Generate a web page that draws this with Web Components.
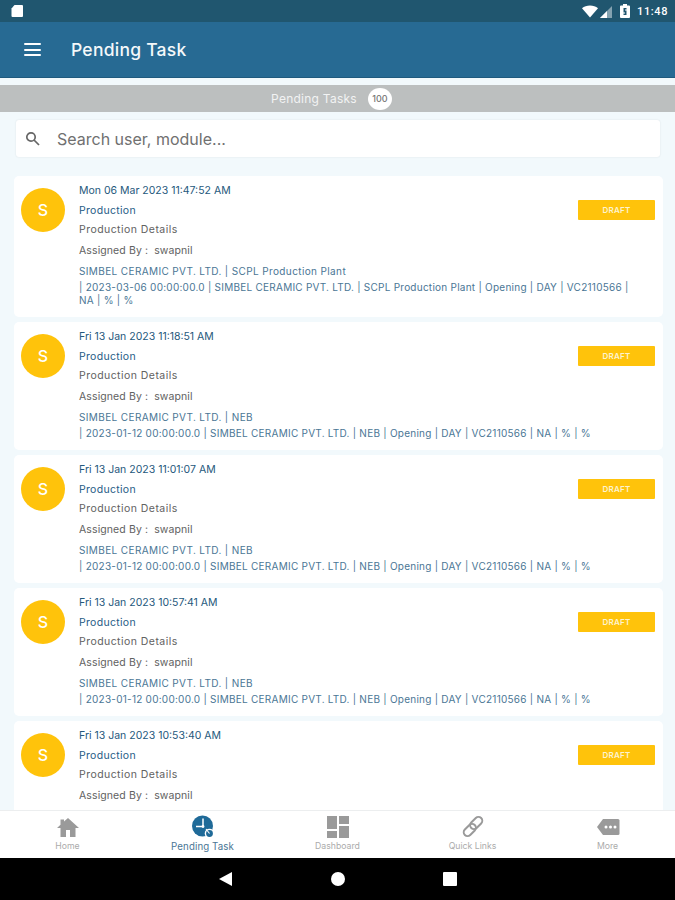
<!DOCTYPE html>
<html>
<head>
<meta charset="utf-8">
<title>Pending Task</title>
<style>
  html, body { margin: 0; padding: 0; }
  body {
    width: 675px;
    height: 900px;
    overflow: hidden;
    display: flex;
    flex-direction: column;
    background: #f2f9fc;
    font-family: Inter, "Open Sans", sans-serif;
  }
  task-list { flex: 1; min-height: 0; }
</style>
</head>
<body>
  <status-bar></status-bar>
  <app-bar>Pending Task</app-bar>
  <count-bar count="100">Pending Tasks</count-bar>
  <search-box placeholder="Search user, module..."></search-box>
  <task-list>
    <task-card date="Mon 06 Mar 2023 11:47:52 AM" company="SIMBEL CERAMIC PVT. LTD. | SCPL Production Plant">| 2023-03-06 00:00:00.0 | SIMBEL CERAMIC PVT. LTD. | SCPL Production Plant | Opening | DAY | VC2110566 | NA | % | %</task-card>
    <task-card date="Fri 13 Jan 2023 11:18:51 AM" company="SIMBEL CERAMIC PVT. LTD. | NEB">| 2023-01-12 00:00:00.0 | SIMBEL CERAMIC PVT. LTD. | NEB | Opening | DAY | VC2110566 | NA | % | %</task-card>
    <task-card date="Fri 13 Jan 2023 11:01:07 AM" company="SIMBEL CERAMIC PVT. LTD. | NEB">| 2023-01-12 00:00:00.0 | SIMBEL CERAMIC PVT. LTD. | NEB | Opening | DAY | VC2110566 | NA | % | %</task-card>
    <task-card date="Fri 13 Jan 2023 10:57:41 AM" company="SIMBEL CERAMIC PVT. LTD. | NEB">| 2023-01-12 00:00:00.0 | SIMBEL CERAMIC PVT. LTD. | NEB | Opening | DAY | VC2110566 | NA | % | %</task-card>
    <task-card date="Fri 13 Jan 2023 10:53:40 AM" company="SIMBEL CERAMIC PVT. LTD. | NEB">| 2023-01-12 00:00:00.0 | SIMBEL CERAMIC PVT. LTD. | NEB | Opening | DAY | VC2110566 | NA | % | %</task-card>
  </task-list>
  <bottom-nav>
    <nav-item label="Home">
      <svg viewBox="0 0 24 24" width="24" height="24"><path fill="#9a9a9a" d="M10 22v-7h4v7h5.500v-9H23L12 3 8 6.600V4.500H4.500v5.300L1 13h3.500v9z"/></svg>
    </nav-item>
    <nav-item label="Pending Task" active>
      <svg viewBox="0 0 24 24" width="24" height="24">
        <circle cx="11.500" cy="11" r="10.500" fill="#1f6a98"/>
        <path fill="none" stroke="#fff" stroke-width="1.500" d="M12 3.500v8H5"/>
        <circle cx="12" cy="11.500" r="1.400" fill="#fff"/>
        <circle cx="18.500" cy="18.500" r="4.800" fill="#fff"/>
        <circle cx="18.500" cy="18.500" r="3.400" fill="#1f6a98"/>
        <path fill="none" stroke="#fff" stroke-width="1.100" d="M15 14l3.500 4.500"/>
      </svg>
    </nav-item>
    <nav-item label="Dashboard">
      <svg viewBox="0 0 24 24" width="24" height="24" fill="#9a9a9a"><path d="M1 1h10v13H1zM13 1h10v8H13zM13 11h10v12H13zM1 16h10v7H1z"/></svg>
    </nav-item>
    <nav-item label="Quick Links">
      <svg viewBox="0 0 24 24" width="24" height="24" fill="none" stroke="#9a9a9a" stroke-width="2"><rect x="11.400" y="1" width="7.600" height="14" rx="3.800" transform="rotate(45 15.200 8)"/><rect x="5" y="8" width="7.600" height="14" rx="3.800" transform="rotate(45 8.800 15)"/></svg>
    </nav-item>
    <nav-item label="More">
      <svg viewBox="0 0 24 24" width="24" height="24"><path fill="#9a9a9a" d="M7 4h15a1.500 1.500 0 0 1 1.500 1.500v13A1.500 1.500 0 0 1 22 20H7L1 12z"/><circle cx="10" cy="12" r="1.500" fill="#fff"/><circle cx="14.500" cy="12" r="1.500" fill="#fff"/><circle cx="19" cy="12" r="1.500" fill="#fff"/></svg>
    </nav-item>
  </bottom-nav>
  <system-nav></system-nav>

<script>
class StatusBar extends HTMLElement {
  constructor() {
    super();
    this.attachShadow({ mode: "open" }).innerHTML = `
      <style>
        :host { display: flex; align-items: center; justify-content: space-between; flex: none;
          height: 22px; padding: 0 7px 0 10px; background: #20566f; color: #fff; }
        .right { display: flex; align-items: center; gap: 2px; }
        .time { font: 500 11px Roboto, sans-serif; margin-left: 5px; letter-spacing: .6px; }
        svg { display: block; }
      </style>
      <svg width="14" height="14" viewBox="0 0 14 14"><path fill="#fff" d="M4.500 1H12a1 1 0 0 1 1 1v10a1 1 0 0 1-1 1H2.500a1 1 0 0 1-1-1V4.500z"/></svg>
      <div class="right">
        <svg width="16" height="13" viewBox="0 0 16 13"><path fill="#fff" d="M0 3.300C2 1.500 5 .5 8 .5s6 1 8 2.800L8 12.500z"/></svg>
        <svg width="13" height="13" viewBox="0 0 13 13"><path fill="#fff" opacity=".45" d="M0 13L12 1v12z"/><path fill="#fff" d="M0 13l7-7v7z"/></svg>
        <svg width="10" height="14" viewBox="0 0 10 14" style="margin-left:5px"><path fill="#fff" d="M3 0h4v1.500h2a1 1 0 0 1 1 1V13a1 1 0 0 1-1 1H1a1 1 0 0 1-1-1V2.500a1 1 0 0 1 1-1h2z"/><path fill="#20566f" d="M3.500 4h3v1.500H5v1h1.500V11h-3V9.500H5v-1H3.500z"/></svg>
        <span class="time">11:48</span>
      </div>`;
  }
}

class AppBar extends HTMLElement {
  constructor() {
    super();
    this.attachShadow({ mode: "open" }).innerHTML = `
      <style>
        :host { display: flex; align-items: center; flex: none; height: 55px; padding-left: 24px;
          background: #276a93; border-bottom: 1px solid #1f5a7e; color: #f4f8fa; }
        .menu { width: 17px; height: 13px; display: flex; flex-direction: column; justify-content: space-between; }
        .menu i { display: block; height: 2px; background: #fff; border-radius: 1px; }
        .title { margin-left: 30px; font-size: 17.500px; font-weight: 500; letter-spacing: .25px; }
      </style>
      <div class="menu"><i></i><i></i><i></i></div>
      <div class="title"><slot></slot></div>`;
  }
}

class CountBar extends HTMLElement {
  constructor() {
    super();
    this.attachShadow({ mode: "open" }).innerHTML = `
      <style>
        :host { display: flex; align-items: center; justify-content: center; flex: none; height: 27px;
          margin-top: 7px; padding-right: 12px; box-sizing: border-box; gap: 11px; background: #bcbfbf;
          color: #f2f3f3; font-size: 12px; letter-spacing: .25px; }
        .badge { width: 24px; height: 22px; border-radius: 50%; background: #fff; color: #777;
          display: flex; align-items: center; justify-content: center; font-size: 9px; font-weight: 500; letter-spacing: 0; }
      </style>
      <span><slot></slot></span>
      <span class="badge">${this.getAttribute("count")}</span>`;
  }
}

class SearchBox extends HTMLElement {
  constructor() {
    super();
    this.attachShadow({ mode: "open" }).innerHTML = `
      <style>
        :host { display: flex; align-items: center; flex: none; height: 37px; margin: 8px 15px 19px 16px;
          padding-left: 9px; background: #fff; border-radius: 3px;
          box-shadow: 0 0 2px rgba(0,0,0,.1); color: #707070; font-size: 16px; }
        svg { display: block; margin-right: 17px; }
      </style>
      <svg width="15" height="15" viewBox="0 0 15 15" fill="none" stroke="#666" stroke-width="1.700"><circle cx="6" cy="6" r="4.200"/><path d="M9 9l5 5"/></svg>
      <span>${this.getAttribute("placeholder")}</span>`;
  }
}

class TaskList extends HTMLElement {
  constructor() {
    super();
    this.attachShadow({ mode: "open" }).innerHTML = `
      <style>
        :host { display: flex; flex-direction: column; gap: 5.500px; padding: 0 12px 0 14px; overflow: hidden; }
      </style>
      <slot></slot>`;
  }
}

class TaskCard extends HTMLElement {
  constructor() {
    super();
    this.attachShadow({ mode: "open" }).innerHTML = `
      <style>
        :host { display: block; flex: none; padding: 8px 8px 9.500px 7px; background: #fff; border-radius: 5px;
          font-size: 10.500px; line-height: 13px; color: #616161; }
        .top { display: flex; gap: 14px; }
        .avatar { flex: none; width: 44px; height: 44px; margin-top: 4px; border-radius: 50%; background: #ffc30b;
          color: #fff; font-size: 16px; font-weight: 500; display: flex; align-items: center; justify-content: center; }
        .lines { flex: 1; min-width: 0; display: flex; flex-direction: column; }
        .blue { color: #1f5c86; }
        .date { color: #25587c; }
        .product { margin-top: 6.500px; letter-spacing: .3px; }
        .details { margin-top: 6.500px; letter-spacing: .45px; }
        .assigned { margin-top: 8px; letter-spacing: .1px; }
        .info { margin-left: 58px; color: #4a7695; font-size: 10px; }
        .company { margin-top: 8px; letter-spacing: .38px; }
        .detail { margin-top: 3px; padding-right: 15px; letter-spacing: .25px; }
        .badge { flex: none; width: 77px; height: 20px; margin-top: 16px; border-radius: 1px;
          background: #ffc30b; color: #fdf3d0; font-size: 8px; font-weight: 600; letter-spacing: .2px;
          display: flex; align-items: center; justify-content: center; }
      </style>
      <div class="top">
        <div class="avatar">S</div>
        <div class="lines">
          <div class="date">${this.getAttribute("date")}</div>
          <div class="blue product">Production</div>
          <div class="details">Production Details</div>
          <div class="assigned">Assigned By :&nbsp; swapnil</div>
        </div>
        <div class="badge">DRAFT</div>
      </div>
      <div class="info">
        <div class="company">${this.getAttribute("company")}</div>
        <div class="detail"><slot></slot></div>
      </div>`;
  }
}

class BottomNav extends HTMLElement {
  constructor() {
    super();
    this.attachShadow({ mode: "open" }).innerHTML = `
      <style>
        :host { display: grid; grid-template-columns: repeat(5, 1fr); flex: none; height: 47px;
          background: #fff; border-top: 1px solid #eceeef; }
      </style>
      <slot></slot>`;
  }
}

class NavItem extends HTMLElement {
  constructor() {
    super();
    this.attachShadow({ mode: "open" }).innerHTML = `
      <style>
        :host { display: flex; flex-direction: column; align-items: center; padding-top: 3px; color: #ababab; font-size: 8.700px; }
        :host([active]) { color: #4a7695; font-size: 9.700px; letter-spacing: .1px; }
        .icon { height: 26px; display: flex; align-items: center; }
        .label { margin-top: 1px; line-height: 11px; white-space: nowrap; }
      </style>
      <div class="icon"><slot></slot></div>
      <div class="label">${this.getAttribute("label")}</div>`;
  }
}

class SystemNav extends HTMLElement {
  constructor() {
    super();
    this.attachShadow({ mode: "open" }).innerHTML = `
      <style>
        :host { display: flex; align-items: center; justify-content: center; gap: 98px; flex: none; height: 42px; background: #000; }
        svg { display: block; }
      </style>
      <svg width="14" height="14" viewBox="0 0 14 14"><path fill="#fff" d="M0 7l13-7v14z"/></svg>
      <svg width="14" height="14" viewBox="0 0 14 14"><circle cx="7" cy="7" r="7" fill="#fff"/></svg>
      <svg width="14" height="14" viewBox="0 0 14 14"><rect width="14" height="14" rx="1" fill="#fff"/></svg>`;
  }
}

customElements.define("status-bar", StatusBar);
customElements.define("app-bar", AppBar);
customElements.define("count-bar", CountBar);
customElements.define("search-box", SearchBox);
customElements.define("task-list", TaskList);
customElements.define("task-card", TaskCard);
customElements.define("bottom-nav", BottomNav);
customElements.define("nav-item", NavItem);
customElements.define("system-nav", SystemNav);
</script>
</body>
</html>
